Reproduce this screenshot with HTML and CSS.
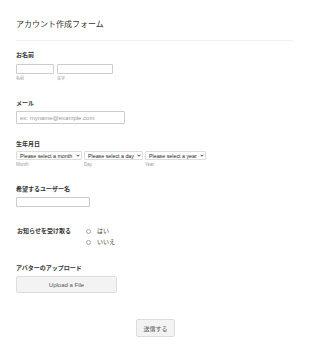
FILE: index.html
```html
<!DOCTYPE html>
<html lang="ja">
<head>
    <meta charset="UTF-8">
    <title>アカウント作成フォーム</title>
    <link rel="stylesheet" href="styles.css">
</head>
<body>
    <div class="form">
        <h1 class="form-title">アカウント作成フォーム</h1>

        <div class="field name-field">
            <label class="field-label">お名前</label>
            <div class="row">
                <div class="sub">
                    <input type="text" class="input input-first">
                    <span class="sub-label">名前</span>
                </div>
                <div class="sub">
                    <input type="text" class="input input-last">
                    <span class="sub-label">苗字</span>
                </div>
            </div>
        </div>

        <div class="field mail-field">
            <label class="field-label">メール</label>
            <input type="text" class="input input-mail" placeholder="ex: myname@example.com">
        </div>

        <div class="field birth-field">
            <label class="field-label">生年月日</label>
            <div class="row">
                <div class="sub">
                    <div class="select-wrap">
                        <select class="select"><option>Please select a month</option></select>
                        <svg class="chevron" viewBox="0 0 8 6"><path d="M1 1.5 L4 4.5 L7 1.5" /></svg>
                    </div>
                    <span class="sub-label latin">Month</span>
                </div>
                <div class="sub">
                    <div class="select-wrap">
                        <select class="select"><option>Please select a day</option></select>
                        <svg class="chevron" viewBox="0 0 8 6"><path d="M1 1.5 L4 4.5 L7 1.5" /></svg>
                    </div>
                    <span class="sub-label latin">Day</span>
                </div>
                <div class="sub">
                    <div class="select-wrap">
                        <select class="select"><option>Please select a year</option></select>
                        <svg class="chevron" viewBox="0 0 8 6"><path d="M1 1.5 L4 4.5 L7 1.5" /></svg>
                    </div>
                    <span class="sub-label latin">Year</span>
                </div>
            </div>
        </div>

        <div class="field user-field">
            <label class="field-label">希望するユーザー名</label>
            <input type="text" class="input input-user">
        </div>

        <div class="field news-field">
            <label class="field-label inline-label">お知らせを受け取る</label>
            <div class="radios">
                <label class="radio"><span class="dot"></span>はい</label>
                <label class="radio"><span class="dot"></span>いいえ</label>
            </div>
        </div>

        <div class="field avatar-field">
            <label class="field-label">アバターのアップロード</label>
            <button class="upload-button">Upload a File</button>
        </div>

        <div class="submit-row">
            <button class="submit-button">送信する</button>
        </div>
    </div>
</body>
</html>
```

FILE: styles.css
```css
body {
    font-family: "Liberation Sans", Arial, "Noto Sans CJK JP", sans-serif;
    margin: 0;
    padding: 0 16px;
    background: #fff;
    color: #2c3345;
}
.form {
    width: 277px;
}
.form-title {
    font-size: 8px;
    font-weight: normal;
    color: #333;
    margin: 0;
    padding: 18px 0 11px 0;
    border-bottom: 1px solid #f0f0f0;
}
.field {
    display: flex;
    flex-direction: column;
    align-items: flex-start;
}
.field-label {
    font-size: 6px;
    font-weight: bold;
    color: #333;
    line-height: 8px;
}
.row {
    display: flex;
    gap: 3px;
    margin-top: 5px;
}
.sub {
    display: flex;
    flex-direction: column;
}
.sub-label {
    font-size: 4px;
    color: #999;
    margin-top: 2px;
    line-height: 5px;
}
.sub-label.latin {
    font-size: 4.5px;
}
.input {
    box-sizing: border-box;
    height: 10px;
    border: 1px solid #ccc;
    border-radius: 1px;
    padding: 0 3px;
    margin: 0;
    font-family: inherit;
    font-size: 6px;
    color: #333;
}
.input::placeholder {
    color: #999;
}
.name-field {
    margin-top: 10px;
}
.input-first {
    width: 38px;
}
.input-last {
    width: 56px;
}
.mail-field {
    margin-top: 18px;
}
.input-mail {
    width: 109px;
    height: 13px;
    margin-top: 4px;
}
.birth-field {
    margin-top: 16px;
}
.birth-field .row {
    gap: 2px;
    margin-top: 3px;
}
.select-wrap {
    position: relative;
    display: flex;
}
.select {
    -webkit-appearance: none;
    appearance: none;
    box-sizing: border-box;
    height: 9px;
    border: 1px solid #ddd;
    border-radius: 1px;
    background: #fff;
    font-family: inherit;
    font-size: 5.3px;
    color: #222;
    padding: 0 8px 0 3px;
    margin: 0;
}
.chevron {
    position: absolute;
    right: 2px;
    top: 3px;
    width: 4px;
    height: 3px;
    fill: none;
    stroke: #333;
    stroke-width: 1.8;
}
.user-field {
    margin-top: 18px;
}
.input-user {
    width: 74px;
    margin-top: 4px;
}
.news-field {
    flex-direction: row;
    align-items: flex-start;
    margin-top: 20px;
    padding-left: 1px;
}
.inline-label {
    width: 69px;
}
.radios {
    display: flex;
    flex-direction: column;
    gap: 3px;
}
.radio {
    display: flex;
    align-items: center;
    gap: 6px;
    font-size: 6px;
    color: #444;
    line-height: 8px;
}
.dot {
    box-sizing: border-box;
    width: 5px;
    height: 5px;
    border: 1px solid #aaa;
    border-radius: 50%;
}
.avatar-field {
    margin-top: 18px;
}
.upload-button {
    margin-top: 4px;
    width: 101px;
    height: 17px;
    background: #f3f3f3;
    border: 1px solid #ddd;
    border-radius: 2px;
    font-family: inherit;
    font-size: 6px;
    color: #555;
}
.submit-row {
    display: flex;
    justify-content: center;
    margin-top: 26px;
}
.submit-button {
    width: 39px;
    height: 18px;
    background: #f3f3f3;
    border: 1px solid #ddd;
    border-radius: 2px;
    font-family: inherit;
    font-size: 6px;
    color: #555;
    margin-left: 2px;
}
```
